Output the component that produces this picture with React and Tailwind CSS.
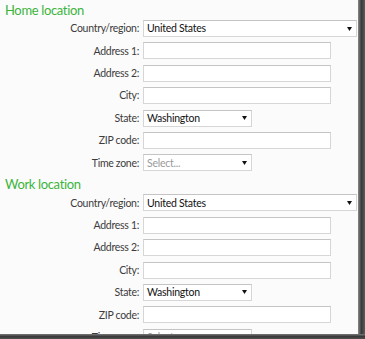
import React from "react";

const font = { fontFamily: '"Lato", "Open Sans", sans-serif' };

function Arrow() {
  return (
    <svg width="5" height="4" viewBox="0 0 5 4" className="shrink-0">
      <path d="M0 0 H5 L2.5 4 Z" fill="#111" />
    </svg>
  );
}

function Row({ label, children }) {
  return (
    <div className="flex items-center h-[17px] mt-[5.4px] first:mt-0">
      <div className="w-[143px] shrink-0 pr-[4px] text-right text-[10.5px] tracking-[-0.3px] text-[#3c3c3c] leading-none">{label}</div>
      {children}
    </div>
  );
}

function TextBox() {
  return <div className="h-[17px] w-[188px] bg-white border border-[#d6d6d6] border-t-[#c4c4c4]" />;
}

function Select({ value, placeholder, width }) {
  return (
    <div className={`h-[17px] ${width} bg-white border border-[#d6d6d6] border-t-[#c4c4c4] flex items-center justify-between pl-[3px] pr-[4px]`}>
      <span className={`text-[10.5px] tracking-[-0.25px] leading-none ${placeholder ? "text-[#9a9a9a]" : "text-[#111]"}`}>{value}</span>
      <Arrow />
    </div>
  );
}

function Section({ title, first }) {
  return (
    <div className="flex flex-col">
      <div className={`h-[20px] flex items-center pl-[5px] pt-[1px] text-[13px] tracking-[-0.35px] text-[#3cb43c] leading-none ${first ? "" : "mt-[3px]"}`}>{title}</div>
      <div className="flex flex-col">
        <Row label="Country/region:"><Select value="United States" width="w-[214px]" /></Row>
        <Row label="Address 1:"><TextBox /></Row>
        <Row label="Address 2:"><TextBox /></Row>
        <Row label="City:"><TextBox /></Row>
        <Row label="State:"><Select value="Washington" width="w-[109px]" /></Row>
        <Row label="ZIP code:"><TextBox /></Row>
        <Row label="Time zone:"><Select value="Select..." placeholder width="w-[109px]" /></Row>
      </div>
    </div>
  );
}

export default function App() {
  return (
    <div className="w-[365px] h-[339px] flex flex-col overflow-hidden" style={font}>
      <div className="flex h-[334px]">
        <div className="w-[358px] h-full bg-[#fbfbfb] overflow-hidden">
          <Section title="Home location" first />
          <Section title="Work location" />
        </div>
        <div className="w-[7px] h-full bg-gradient-to-r from-[#8a8a8a] via-[#3a3a3a] to-[#5c5c5c]" />
      </div>
      <div className="h-[5px] bg-gradient-to-b from-[#7a7a7a] via-[#3a3a3a] to-[#505050]" />
    </div>
  );
}
